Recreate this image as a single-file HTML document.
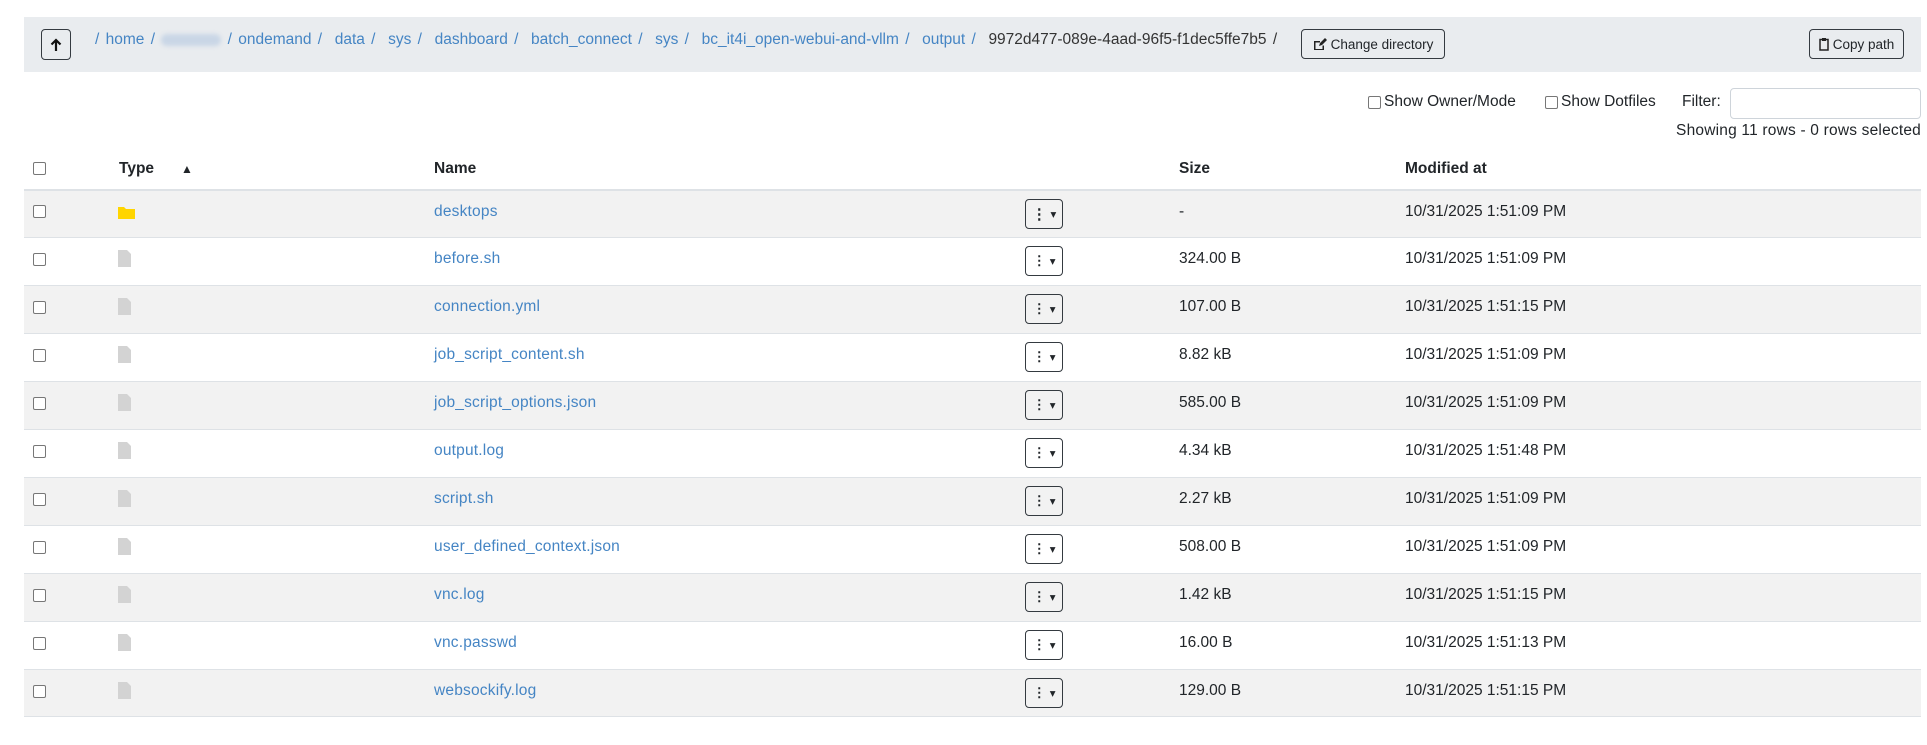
<!DOCTYPE html>
<html><head><meta charset="utf-8"><style>
*{box-sizing:border-box;margin:0;padding:0}
body{width:1927px;height:745px;background:#fff;font-family:"Liberation Sans",sans-serif;font-size:15.5px;color:#212529;position:relative;overflow:hidden}
.abs{position:absolute}
.bar{left:24px;top:17px;width:1897px;height:55px;background:#e9ecef}
.btn{position:absolute;border:1px solid #343a40;border-radius:4px;background:transparent;display:flex;align-items:center;justify-content:center;font-size:13.5px;color:#212529}
.crumb{left:95px;top:31px;font-size:15.5px;color:#4585c4;white-space:nowrap;word-spacing:2px}
.crumb .d{color:#333}
.blur{display:inline-block;width:60px;height:12px;background:#c9d6e6;border-radius:6px;filter:blur(2px);vertical-align:middle}
.cb{position:absolute;width:13px;height:13px;border:1px solid #777;border-radius:2px;background:#fff}
.row{position:absolute;left:24px;width:1897px;height:48px;border-top:1px solid #dee2e6}
.row.g{background:#f2f2f2}
.row span{position:absolute;top:12px;font-size:15.5px}
.nm{left:410px;color:#4585c4;letter-spacing:0.2px}
.sz{left:1155px}
.md{left:1381px}
.mb{left:1001px;top:8px;width:38px;height:30px}
.th{position:absolute;top:160px;font-weight:bold;font-size:15.5px}
</style></head><body>
<div class="abs bar"></div>
<div class="btn" style="left:41px;top:29px;width:30px;height:31px"><svg width="12" height="14" viewBox="0 0 12 14"><path d="M6 13V2M1.5 6.5L6 2l4.5 4.5" stroke="#111" stroke-width="2.2" fill="none"/></svg></div>
<div class="abs crumb">/ home / <span class="blur"></span> / ondemand / &nbsp;data / &nbsp;sys / &nbsp;dashboard / &nbsp;batch_connect / &nbsp;sys / &nbsp;bc_it4i_open-webui-and-vllm / &nbsp;output / &nbsp;<span class="d">9972d477-089e-4aad-96f5-f1dec5ffe7b5 /</span></div>
<div class="btn" style="left:1301px;top:29px;width:144px;height:30px"><svg width="14" height="13" viewBox="0 0 14 13" style="margin-right:4px"><path d="M1 3h6v1.5H2.5v6.5h7V7.5H11V12H1z M6 8l1-3 5-5 2 2-5 5z" fill="#222"/></svg>Change directory</div>
<div class="btn" style="left:1809px;top:29px;width:95px;height:30px"><svg width="10" height="14" viewBox="0 0 10 14" style="margin-right:4px"><path d="M1 2.5h8v10.5H1z" stroke="#222" stroke-width="1.5" fill="none"/><rect x="3" y="1" width="4" height="3" fill="#222"/></svg>Copy path</div>

<div class="cb" style="left:1368px;top:96px"></div><div class="abs" style="left:1384px;top:93px">Show Owner/Mode</div>
<div class="cb" style="left:1545px;top:96px"></div><div class="abs" style="left:1561px;top:93px">Show Dotfiles</div>
<div class="abs" style="left:1682px;top:93px">Filter:</div>
<div class="abs" style="left:1730px;top:88px;width:191px;height:31px;border:1px solid #ced4da;border-radius:4px"></div>
<div class="abs" style="right:6px;top:122px;letter-spacing:0.2px">Showing 11 rows - 0 rows selected</div>

<div class="cb" style="left:33px;top:162px"></div>
<div class="th" style="left:119px">Type</div>
<div class="abs" style="left:181px;top:162px;font-size:12px">▲</div>
<div class="th" style="left:434px">Name</div>
<div class="th" style="left:1179px">Size</div>
<div class="th" style="left:1405px">Modified at</div>

<div class="row g" style="top:189px;border-top:2px solid #dee2e6"><div class="cb" style="left:9px;top:14px"></div><svg class="abs" style="left:94px;top:15px" width="17" height="13"><path d="M0 1h6l2 2h9v10H0z" fill="#ffd500"/></svg><span class="nm">desktops</span><div class="btn mb"><b style="font-size:15px">⋮</b>&nbsp;<small>▾</small></div><span class="sz">-</span><span class="md">10/31/2025 1:51:09 PM</span></div>
<div class="row" style="top:237px"><div class="cb" style="left:9px;top:15px"></div><svg class="abs" style="left:94px;top:12px" width="13" height="17"><path d="M0 0h9l4 4v13H0z" fill="#d3d3d3"/></svg><span class="nm">before.sh</span><div class="btn mb"><b>⋮</b>&nbsp;<small>▾</small></div><span class="sz">324.00 B</span><span class="md">10/31/2025 1:51:09 PM</span></div>
<div class="row g" style="top:285px"><div class="cb" style="left:9px;top:15px"></div><svg class="abs" style="left:94px;top:12px" width="13" height="17"><path d="M0 0h9l4 4v13H0z" fill="#d3d3d3"/></svg><span class="nm">connection.yml</span><div class="btn mb"><b>⋮</b>&nbsp;<small>▾</small></div><span class="sz">107.00 B</span><span class="md">10/31/2025 1:51:15 PM</span></div>
<div class="row" style="top:333px"><div class="cb" style="left:9px;top:15px"></div><svg class="abs" style="left:94px;top:12px" width="13" height="17"><path d="M0 0h9l4 4v13H0z" fill="#d3d3d3"/></svg><span class="nm">job_script_content.sh</span><div class="btn mb"><b>⋮</b>&nbsp;<small>▾</small></div><span class="sz">8.82 kB</span><span class="md">10/31/2025 1:51:09 PM</span></div>
<div class="row g" style="top:381px"><div class="cb" style="left:9px;top:15px"></div><svg class="abs" style="left:94px;top:12px" width="13" height="17"><path d="M0 0h9l4 4v13H0z" fill="#d3d3d3"/></svg><span class="nm">job_script_options.json</span><div class="btn mb"><b>⋮</b>&nbsp;<small>▾</small></div><span class="sz">585.00 B</span><span class="md">10/31/2025 1:51:09 PM</span></div>
<div class="row" style="top:429px"><div class="cb" style="left:9px;top:15px"></div><svg class="abs" style="left:94px;top:12px" width="13" height="17"><path d="M0 0h9l4 4v13H0z" fill="#d3d3d3"/></svg><span class="nm">output.log</span><div class="btn mb"><b>⋮</b>&nbsp;<small>▾</small></div><span class="sz">4.34 kB</span><span class="md">10/31/2025 1:51:48 PM</span></div>
<div class="row g" style="top:477px"><div class="cb" style="left:9px;top:15px"></div><svg class="abs" style="left:94px;top:12px" width="13" height="17"><path d="M0 0h9l4 4v13H0z" fill="#d3d3d3"/></svg><span class="nm">script.sh</span><div class="btn mb"><b>⋮</b>&nbsp;<small>▾</small></div><span class="sz">2.27 kB</span><span class="md">10/31/2025 1:51:09 PM</span></div>
<div class="row" style="top:525px"><div class="cb" style="left:9px;top:15px"></div><svg class="abs" style="left:94px;top:12px" width="13" height="17"><path d="M0 0h9l4 4v13H0z" fill="#d3d3d3"/></svg><span class="nm">user_defined_context.json</span><div class="btn mb"><b>⋮</b>&nbsp;<small>▾</small></div><span class="sz">508.00 B</span><span class="md">10/31/2025 1:51:09 PM</span></div>
<div class="row g" style="top:573px"><div class="cb" style="left:9px;top:15px"></div><svg class="abs" style="left:94px;top:12px" width="13" height="17"><path d="M0 0h9l4 4v13H0z" fill="#d3d3d3"/></svg><span class="nm">vnc.log</span><div class="btn mb"><b>⋮</b>&nbsp;<small>▾</small></div><span class="sz">1.42 kB</span><span class="md">10/31/2025 1:51:15 PM</span></div>
<div class="row" style="top:621px"><div class="cb" style="left:9px;top:15px"></div><svg class="abs" style="left:94px;top:12px" width="13" height="17"><path d="M0 0h9l4 4v13H0z" fill="#d3d3d3"/></svg><span class="nm">vnc.passwd</span><div class="btn mb"><b>⋮</b>&nbsp;<small>▾</small></div><span class="sz">16.00 B</span><span class="md">10/31/2025 1:51:13 PM</span></div>
<div class="row g" style="top:669px;border-bottom:1px solid #dee2e6"><div class="cb" style="left:9px;top:15px"></div><svg class="abs" style="left:94px;top:12px" width="13" height="17"><path d="M0 0h9l4 4v13H0z" fill="#d3d3d3"/></svg><span class="nm">websockify.log</span><div class="btn mb"><b>⋮</b>&nbsp;<small>▾</small></div><span class="sz">129.00 B</span><span class="md">10/31/2025 1:51:15 PM</span></div>
</body></html>
